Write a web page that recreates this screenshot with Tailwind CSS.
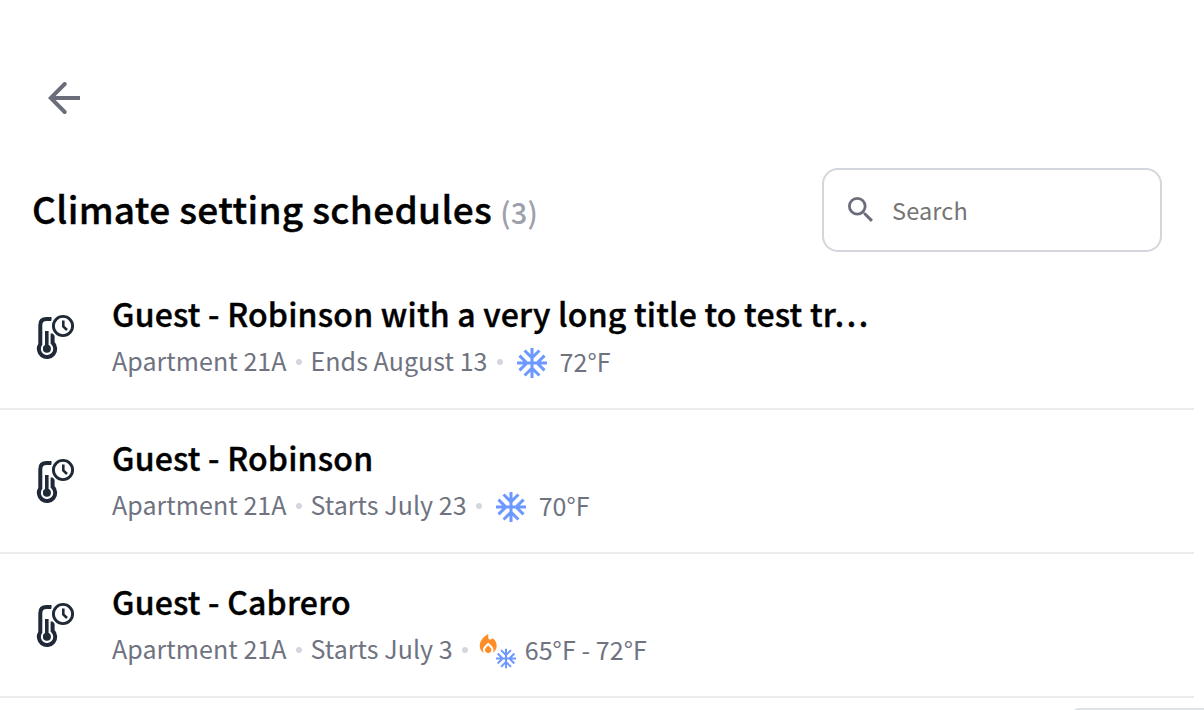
<!DOCTYPE html>
<html lang="en">
<head>
<meta charset="utf-8">
<title>Climate setting schedules</title>
<script src="https://cdn.jsdelivr.net/npm/@tailwindcss/browser@4"></script>
</head>
<body class="h-[710px] w-[1204px] overflow-hidden bg-white font-['Noto_Sans_CJK_SC','Source_Sans_Pro',sans-serif] text-black">
<svg class="hidden">
  <symbol id="thermo" viewBox="0 0 40 48">
    <path d="M15.500 5.100H10.500Q4.300 5.100 4.300 11V30.100A8.200 8.200 0 1 0 16.600 28.800V19.500" fill="none" stroke="#1f2937" stroke-width="4"/>
    <path d="M10.800 17V34" stroke="#1f2937" stroke-width="3.600"/>
    <circle cx="10.900" cy="34.700" r="4" fill="#1f2937"/>
    <circle cx="27" cy="12" r="12.700" fill="#fff"/>
    <circle cx="27" cy="12" r="9.600" fill="none" stroke="#1f2937" stroke-width="2.900"/>
    <path d="M27.300 6.500V12.400L31 16" fill="none" stroke="#1f2937" stroke-width="2.600"/>
  </symbol>
  <symbol id="snow" viewBox="2 2 20 20">
    <path fill="#6c98ff" d="M22 11h-4.170l3.240-3.240-1.410-1.420L15 11h-2V9l4.660-4.660-1.420-1.410L13 6.170V2h-2v4.170L7.760 2.930 6.340 4.340 11 9v2H9L4.340 6.340 2.930 7.760 6.170 11H2v2h4.170l-3.240 3.240 1.410 1.420L9 13h2v2l-4.660 4.660 1.420 1.410L11 17.830V22h2v-4.170l3.240 3.240 1.420-1.410L13 15v-2h2l4.660 4.660 1.410-1.420L17.830 13H22z"/>
  </symbol>
</svg>

<header class="flex h-[168px] items-start pl-12 pt-[82px]">
  <svg class="h-8 w-8" viewBox="0 0 32 32" fill="none" stroke="#6b6e7a"><path stroke-width="4" d="M32 16H3"/><path stroke-width="3.900" stroke-linecap="round" d="M16.700 2L2.700 16L16.700 30"/></svg>
</header>

<div class="flex h-[98px] items-start justify-between pl-8 pr-[42px]">
  <h1 class="flex items-baseline pt-4 text-[37px] leading-[48px] font-medium whitespace-nowrap"><span class="tracking-[0.35px] [-webkit-text-stroke:0.4px_black]">Climate setting schedules</span><span class="ml-2 text-[29px] tracking-[0.2px] text-[#9ca0ab]">(3)</span></h1>
  <div class="flex h-[84px] w-[340px] items-center rounded-2xl border-2 border-[#d3d6dc] pl-6">
    <svg class="mb-px h-[25px] w-[25px]" viewBox="3 3 17.500 17.500" fill="#6b6e7a"><path d="M15.500 14h-.790l-.280-.270A6.470 6.470 0 0 0 16 9.500 6.500 6.500 0 1 0 9.500 16c1.610 0 3.090-.590 4.230-1.570l.270.280v.790l5 4.990L20.490 19l-4.990-5zm-6 0C7.010 14 5 11.990 5 9.500S7.010 5 9.500 5 14 7.010 14 9.500 11.990 14 9.500 14z"/></svg>
    <span class="ml-[19px] text-[23.500px] leading-8 tracking-[0.15px] text-[#757575]">Search</span>
  </div>
</div>

<main class="w-[1194px]">
  <section class="flex h-36 border-b-2 border-[#ececee] pl-9">
    <svg class="mt-12 h-12 w-10"><use href="#thermo"/></svg>
    <div class="ml-9 pt-[27px]">
      <h2 class="text-[32px] leading-10 font-medium tracking-[0.2px] whitespace-nowrap [-webkit-text-stroke:0.4px_black]">Guest - Robinson with a very long title to test tr…</h2>
      <div class="mt-[11px] flex h-8 items-center text-[25px] leading-8 tracking-[0.06px] whitespace-nowrap text-[#6f7380]">
        <span>Apartment 21A</span><i class="mx-[9px] mt-1 h-[6px] w-[6px] rounded-full bg-[#d3d6dc]"></i><span>Ends August 13</span><i class="mx-[9px] mt-1 h-[6px] w-[6px] rounded-full bg-[#d3d6dc]"></i>
        <svg class="mt-[6px] ml-[5px] h-[30px] w-[30px]"><use href="#snow"/></svg><span class="mt-[2px] ml-[13px]">72°F</span>
      </div>
    </div>
  </section>
  <section class="flex h-36 border-b-2 border-[#ececee] pl-9">
    <svg class="mt-12 h-12 w-10"><use href="#thermo"/></svg>
    <div class="ml-9 pt-[27px]">
      <h2 class="text-[32px] leading-10 font-medium tracking-[0.2px] whitespace-nowrap [-webkit-text-stroke:0.4px_black]">Guest - Robinson</h2>
      <div class="mt-[11px] flex h-8 items-center text-[25px] leading-8 tracking-[0.06px] whitespace-nowrap text-[#6f7380]">
        <span>Apartment 21A</span><i class="mx-[9px] mt-1 h-[6px] w-[6px] rounded-full bg-[#d3d6dc]"></i><span>Starts July 23</span><i class="mx-[9px] mt-1 h-[6px] w-[6px] rounded-full bg-[#d3d6dc]"></i>
        <svg class="mt-[6px] ml-[5px] h-[30px] w-[30px]"><use href="#snow"/></svg><span class="mt-[2px] ml-[13px]">70°F</span>
      </div>
    </div>
  </section>
  <section class="flex h-36 border-b-2 border-[#ececee] pl-9">
    <svg class="mt-12 h-12 w-10"><use href="#thermo"/></svg>
    <div class="ml-9 pt-[27px]">
      <h2 class="text-[32px] leading-10 font-medium tracking-[0.2px] whitespace-nowrap [-webkit-text-stroke:0.4px_black]">Guest - Cabrero</h2>
      <div class="mt-[11px] flex h-8 items-center text-[25px] leading-8 tracking-[0.06px] whitespace-nowrap text-[#6f7380]">
        <span>Apartment 21A</span><i class="mx-[9px] mt-1 h-[6px] w-[6px] rounded-full bg-[#d3d6dc]"></i><span>Starts July 3</span><i class="mx-[9px] mt-1 h-[6px] w-[6px] rounded-full bg-[#d3d6dc]"></i>
        <svg class="mt-[6px] ml-[2px] h-[36px] w-[38px]" viewBox="0 0 38 36">
          <g transform="translate(-3.500 -1.100) scale(1.060)" fill="#ff8d25">
            <path d="M12 12.900l-2.130 2.090C9.310 15.550 9 16.280 9 17.060 9 18.680 10.350 20 12 20s3-1.320 3-2.940c0-.780-.310-1.520-.870-2.070L12 12.900z"/>
            <path d="M16 6l-.440.550C14.380 8.020 12 7.190 12 5.300V2S4 6 4 13c0 2.920 1.560 5.470 3.890 6.860-.560-.790-.890-1.760-.890-2.800 0-1.320.520-2.560 1.470-3.500L12 10.100l3.530 3.470c.950.930 1.470 2.170 1.470 3.500 0 1.020-.310 1.960-.850 2.750 1.890-1.150 3.290-3.060 3.710-5.300.660-3.550-1.070-6.900-3.860-8.520z"/>
          </g>
          <use href="#snow" x="17" y="15.500" width="20" height="20"/>
        </svg><span class="mt-[2px] ml-2">65°F - 72°F</span>
      </div>
    </div>
  </section>
</main>
<footer class="mt-[10px] ml-[1071px] h-3 rounded-tl-lg border-t-2 border-[#dde2e7]"></footer>
</body>
</html>
